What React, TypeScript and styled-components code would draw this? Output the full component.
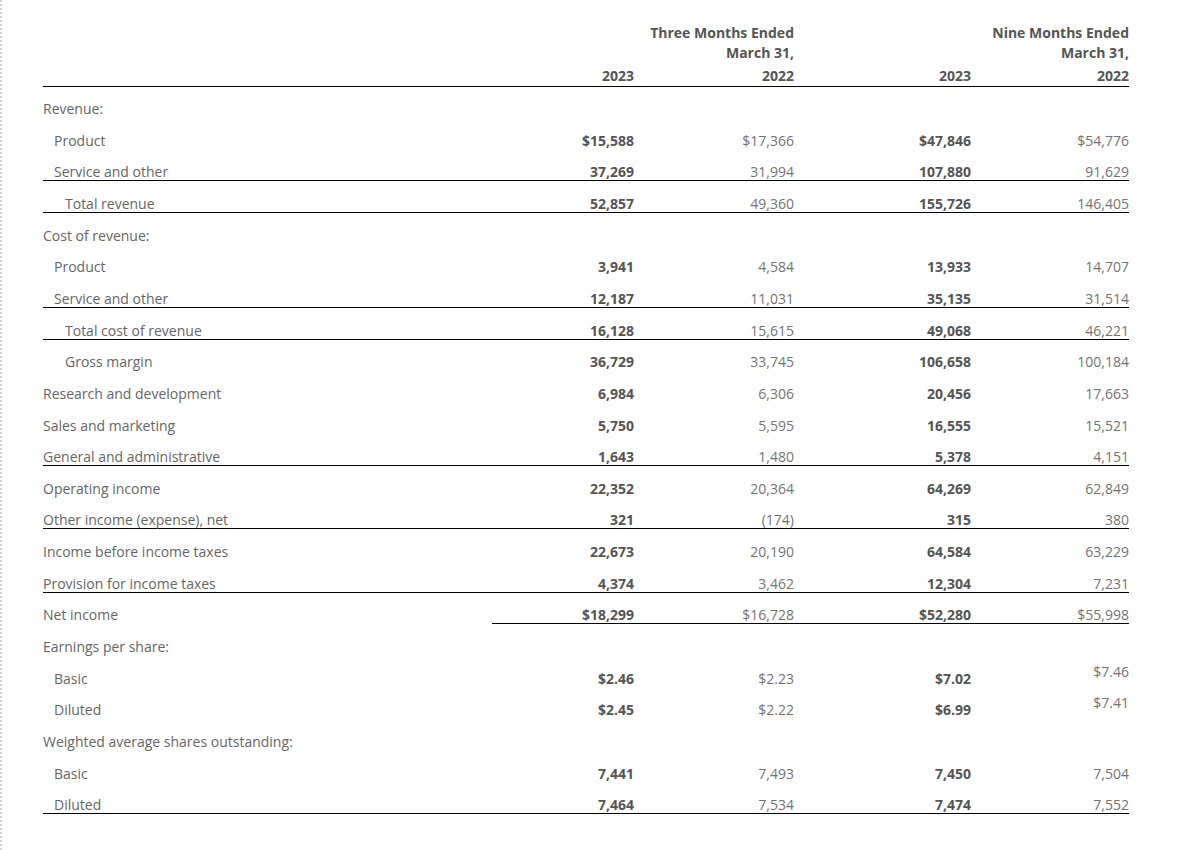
import React from 'react';
import styled, { createGlobalStyle } from 'styled-components';

const GlobalStyle = createGlobalStyle`
  html, body { margin: 0; padding: 0; background: #ffffff; }
  body { font-family: "Open Sans", "Noto Sans", "Liberation Sans", sans-serif; }
`;

const Page = styled.div`
  min-height: 100vh;
  box-sizing: border-box;
  border-left: 2px dotted #d2d2d2;
  padding: 23px 0 0 41px;
`;

const Table = styled.table`
  width: 1086px;
  table-layout: fixed;
  border-collapse: separate;
  border-spacing: 0;
  font-size: 14px;
  line-height: 20px;
`;

const Col = styled.col<{ $w: number }>`
  width: ${(p) => p.$w}px;
`;

const HeadCell = styled.th`
  padding: 0;
  text-align: right;
  vertical-align: bottom;
  font-weight: 700;
  color: #555555;
  border-bottom: 1px solid #000000;
`;

const Year = styled.div`
  margin-top: 2.5px;
`;

type Line = 'full' | 'values' | undefined;

const LabelCell = styled.td<{ $indent: number; $line: Line }>`
  padding: 14.65px 0 0 ${(p) => p.$indent * 11}px;
  line-height: 16px;
  color: #656565;
  white-space: nowrap;
  border-bottom: 1px solid ${(p) => (p.$line === 'full' ? '#000000' : 'transparent')};
`;

const ValueCell = styled.td<{ $bold: boolean; $line: Line; $raised?: boolean }>`
  padding: ${(p) => (p.$raised ? '7.65px 0 7px' : '14.65px 0 0')};
  line-height: 16px;
  text-align: right;
  white-space: nowrap;
  font-weight: ${(p) => (p.$bold ? 700 : 400)};
  color: ${(p) => (p.$bold ? '#555555' : '#737373')};
  border-bottom: 1px solid ${(p) => (p.$line ? '#000000' : 'transparent')};
`;

type Row = {
  label: string;
  indent: number;
  values?: [string, string, string, string];
  line?: Line;
  raisedLast?: boolean;
};

const rows: Row[] = [
  { label: 'Revenue:', indent: 0 },
  { label: 'Product', indent: 1, values: ['$15,588', '$17,366', '$47,846', '$54,776'] },
  { label: 'Service and other', indent: 1, values: ['37,269', '31,994', '107,880', '91,629'], line: 'full' },
  { label: 'Total revenue', indent: 2, values: ['52,857', '49,360', '155,726', '146,405'], line: 'full' },
  { label: 'Cost of revenue:', indent: 0 },
  { label: 'Product', indent: 1, values: ['3,941', '4,584', '13,933', '14,707'] },
  { label: 'Service and other', indent: 1, values: ['12,187', '11,031', '35,135', '31,514'], line: 'full' },
  { label: 'Total cost of revenue', indent: 2, values: ['16,128', '15,615', '49,068', '46,221'], line: 'full' },
  { label: 'Gross margin', indent: 2, values: ['36,729', '33,745', '106,658', '100,184'] },
  { label: 'Research and development', indent: 0, values: ['6,984', '6,306', '20,456', '17,663'] },
  { label: 'Sales and marketing', indent: 0, values: ['5,750', '5,595', '16,555', '15,521'] },
  { label: 'General and administrative', indent: 0, values: ['1,643', '1,480', '5,378', '4,151'], line: 'full' },
  { label: 'Operating income', indent: 0, values: ['22,352', '20,364', '64,269', '62,849'] },
  { label: 'Other income (expense), net', indent: 0, values: ['321', '(174)', '315', '380'], line: 'full' },
  { label: 'Income before income taxes', indent: 0, values: ['22,673', '20,190', '64,584', '63,229'] },
  { label: 'Provision for income taxes', indent: 0, values: ['4,374', '3,462', '12,304', '7,231'], line: 'full' },
  { label: 'Net income', indent: 0, values: ['$18,299', '$16,728', '$52,280', '$55,998'], line: 'values' },
  { label: 'Earnings per share:', indent: 0 },
  { label: 'Basic', indent: 1, values: ['$2.46', '$2.23', '$7.02', '$7.46'], raisedLast: true },
  { label: 'Diluted', indent: 1, values: ['$2.45', '$2.22', '$6.99', '$7.41'], raisedLast: true },
  { label: 'Weighted average shares outstanding:', indent: 0 },
  { label: 'Basic', indent: 1, values: ['7,441', '7,493', '7,450', '7,504'] },
  { label: 'Diluted', indent: 1, values: ['7,464', '7,534', '7,474', '7,552'], line: 'full' },
];

const widths = [449, 142, 160, 177, 158];

export default function App() {
  return (
    <>
      <GlobalStyle />
      <Page>
        <Table>
          <colgroup>
            {widths.map((w, i) => (
              <Col key={i} $w={w} />
            ))}
          </colgroup>
          <thead>
            <tr>
              <HeadCell />
              <HeadCell>2023</HeadCell>
              <HeadCell>
                <div>Three Months Ended</div>
                <div>March 31,</div>
                <Year>2022</Year>
              </HeadCell>
              <HeadCell>2023</HeadCell>
              <HeadCell>
                <div>Nine Months Ended</div>
                <div>March 31,</div>
                <Year>2022</Year>
              </HeadCell>
            </tr>
          </thead>
          <tbody>
            {rows.map((r, i) => {
              const vals = r.values ?? ['', '', '', ''];
              return (
                <tr key={i}>
                  <LabelCell $indent={r.indent} $line={r.line}>
                    {r.label}
                  </LabelCell>
                  {vals.map((v, j) => (
                    <ValueCell
                      key={j}
                      $bold={j % 2 === 0}
                      $line={r.line}
                      $raised={r.raisedLast && j === 3}
                    >
                      {v}
                    </ValueCell>
                  ))}
                </tr>
              );
            })}
          </tbody>
        </Table>
      </Page>
    </>
  );
}
